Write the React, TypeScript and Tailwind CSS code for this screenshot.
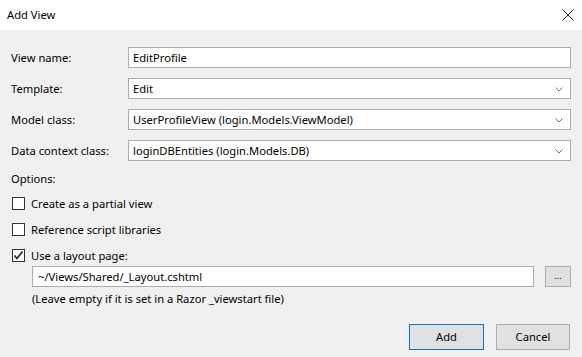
import React from "react";

const Chevron = () => (
  <svg width="8" height="5" viewBox="0 0 8 5" className="absolute right-[7px] top-[8px]">
    <path d="M0.5 0.5 L4 4 L7.5 0.5" fill="none" stroke="#707070" strokeWidth="1" />
  </svg>
);

const Field = ({ label, value, combo }: { label: string; value: string; combo?: boolean }) => (
  <div className="flex items-center h-[21px]">
    <div className="w-[128px] shrink-0 pl-[11px] text-[#000]">{label}</div>
    <div className="relative flex-1 h-[21px] bg-white border border-[#adadad] flex items-center pl-[4px]">
      <span>{value}</span>
      {combo && <Chevron />}
    </div>
  </div>
);

const Check = ({ label, checked }: { label: string; checked?: boolean }) => (
  <div className="flex items-center h-[13px]">
    <div className="ml-[12px] w-[13px] h-[13px] border border-[#333] bg-white relative">
      {checked && (
        <svg width="11" height="11" viewBox="0 0 11 11" className="absolute left-0 top-0">
          <path d="M1.5 5.5 L4 8.5 L9.5 1.5" fill="none" stroke="#222" strokeWidth="1.6" />
        </svg>
      )}
    </div>
    <span className="ml-[6px]">{label}</span>
  </div>
);

export default function App() {
  return (
    <div
      className="w-[582px] h-[357px] bg-[#f0f0f0] text-[11.2px] leading-[16px] text-black overflow-hidden flex flex-col"
      style={{ fontFamily: '"Noto Sans", "Open Sans", sans-serif' }}
    >
      <div className="h-[30px] bg-white flex items-center justify-between shrink-0">
        <span className="ml-[7px]">Add View</span>
        <svg width="12" height="12" viewBox="0 0 12 12" className="mr-[8px]">
          <path d="M0.5 0.5 L11.5 11.5 M11.5 0.5 L0.5 11.5" stroke="#222" strokeWidth="1" />
        </svg>
      </div>
      <div className="pr-[11px] pt-[17px] flex flex-col gap-[10px]">
        <Field label="View name:" value="EditProfile" />
        <Field label="Template:" value="Edit" combo />
        <Field label="Model class:" value="UserProfileView (login.Models.ViewModel)" combo />
        <Field label="Data context class:" value="loginDBEntities (login.Models.DB)" combo />
      </div>
      <div className="pl-[11px] mt-[10px] h-[16px] leading-[16px]">Options:</div>
      <div className="mt-[10px] flex flex-col gap-[13px]">
        <Check label="Create as a partial view" />
        <Check label="Reference script libraries" />
        <Check label="Use a layout page:" checked />
      </div>
      <div className="mt-[4px] flex items-center pl-[32px] pr-[11px] h-[21px]">
        <div className="flex-1 h-[21px] bg-white border border-[#adadad] flex items-center pl-[5px]">
          ~/Views/Shared/_Layout.cshtml
        </div>
        <div className="ml-[11px] w-[26px] h-[21px] bg-[#e1e1e1] border border-[#adadad] flex items-end justify-center text-[9px] leading-none pb-[6px]">
          ...
        </div>
      </div>
      <div className="pl-[32px] mt-[4px] h-[16px]">(Leave empty if it is set in a Razor _viewstart file)</div>
      <div className="mt-[17px] flex justify-end pr-[12px] gap-[12px]">
        <div className="w-[75px] h-[26px] bg-[#e1e1e1] border border-[#0078d7] flex items-center justify-center">Add</div>
        <div className="w-[74px] h-[26px] bg-[#e1e1e1] border border-[#adadad] flex items-center justify-center">Cancel</div>
      </div>
    </div>
  );
}
